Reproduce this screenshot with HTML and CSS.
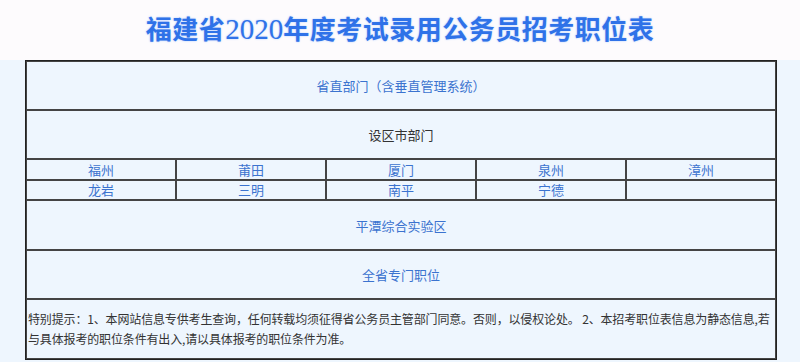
FILE: index.html
```html
<!DOCTYPE html>
<html>
<head>
  <meta charset="utf-8">
  <title>福建省2020年度考试录用公务员招考职位表</title>
  <link rel="stylesheet" href="styles.css">
</head>
<body>
  <div class="header">
    <h1>福建省<span class="year">2020</span>年度考试录用公务员招考职位表</h1>
  </div>

  <div class="container">
    <table class="job-table">
      <tr class="row-big">
        <td colspan="5"><a href="#">省直部门（含垂直管理系统）</a></td>
      </tr>
      <tr class="row-big">
        <td colspan="5" class="plain">设区市部门</td>
      </tr>
      <tr class="row-city">
        <td><a href="#">福州</a></td>
        <td><a href="#">莆田</a></td>
        <td><a href="#">厦门</a></td>
        <td><a href="#">泉州</a></td>
        <td><a href="#">漳州</a></td>
      </tr>
      <tr class="row-city row-city2">
        <td><a href="#">龙岩</a></td>
        <td><a href="#">三明</a></td>
        <td><a href="#">南平</a></td>
        <td><a href="#">宁德</a></td>
        <td></td>
      </tr>
      <tr class="row-big row-tall">
        <td colspan="5"><a href="#">平潭综合实验区</a></td>
      </tr>
      <tr class="row-big">
        <td colspan="5"><a href="#">全省专门职位</a></td>
      </tr>
      <tr class="row-note">
        <td colspan="5">特别提示：1、本网站信息专供考生查询，任何转载均须征得省公务员主管部门同意。否则，以侵权论处。 2、本招考职位表信息为静态信息,若与具体报考的职位条件有出入,请以具体报考的职位条件为准。</td>
      </tr>
    </table>
  </div>
</body>
</html>
```

FILE: styles.css
```css
body {
  margin: 0;
  background-color: #eef6fe;
  font-family: "Noto Sans CJK SC", "Noto Sans", sans-serif;
  color: #333;
}

.header {
  height: 60px;
  background-color: #fdfbfd;
  text-align: center;
}

.header h1 {
  margin: 0;
  line-height: 56px;
  font-size: 26px;
  font-weight: 700;
  color: #2f72e8;
  letter-spacing: 0.5px;
  text-shadow: 0 0 2px #a8c8ff;
}

.header .year {
  font-family: "Liberation Serif", serif;
  font-weight: 400;
  font-size: 29px;
  letter-spacing: 0;
}

.container {
  padding: 0 23px 0 25px;
}

.job-table {
  width: 752px;
  border: 1px solid #222;
  border-spacing: 0;
  table-layout: fixed;
}

.job-table td {
  box-sizing: border-box;
  width: 150px;
  padding: 0;
  border: 1px solid #444;
  text-align: center;
  font-size: 13px;
}

.job-table a {
  color: #3b73cf;
  text-decoration: none;
}

.job-table .plain {
  color: #333;
}

.row-big td {
  height: 49px;
}

.row-tall td {
  height: 50px;
}

.row-city td {
  height: 21px;
  line-height: 18px;
}

.row-city2 td {
  height: 20px;
}

.row-note td {
  height: 60px;
  padding: 9px 0 0 1px;
  vertical-align: top;
  text-align: left;
  font-size: 12px;
  line-height: 20px;
  letter-spacing: -0.15px;
}
```
